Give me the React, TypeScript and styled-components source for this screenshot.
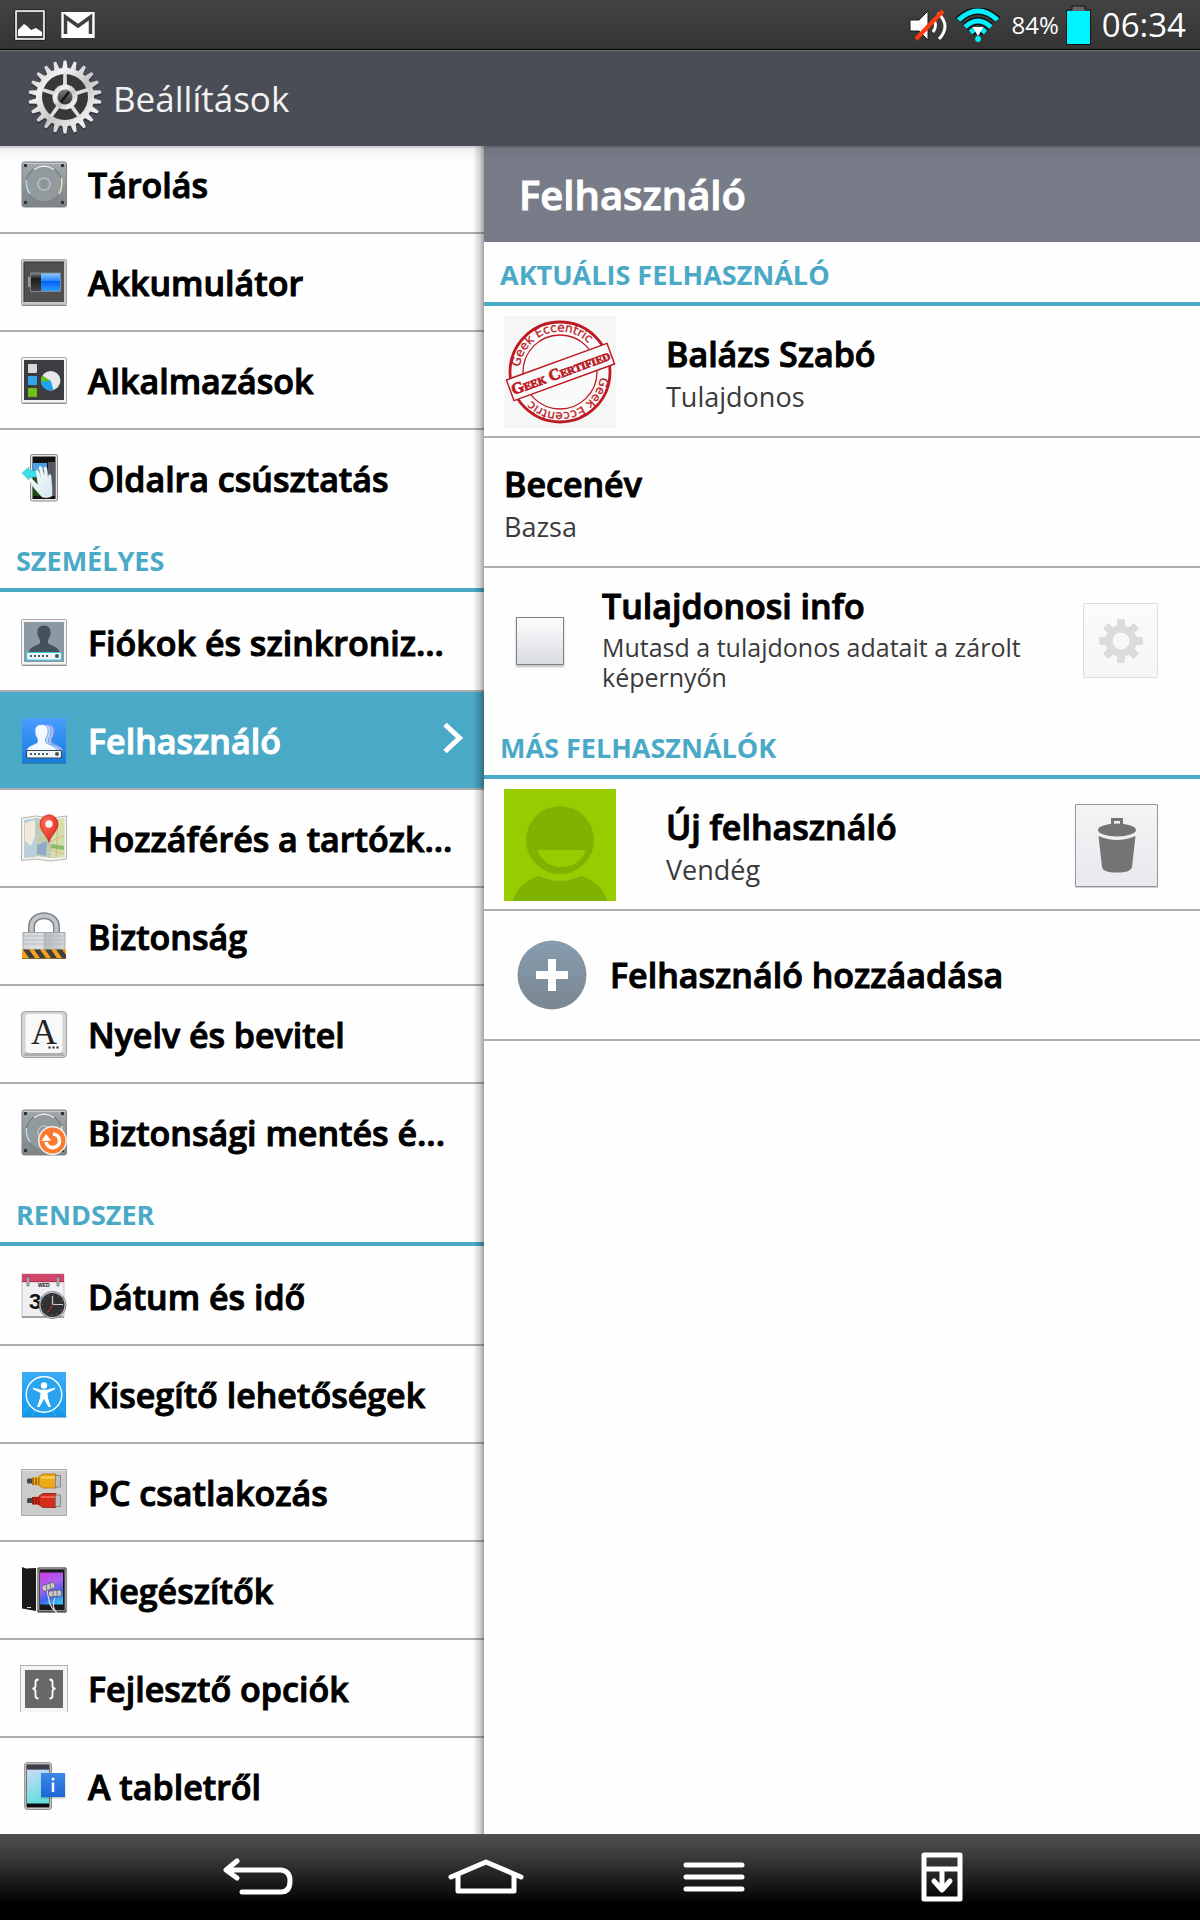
import React from "react";
import styled, { createGlobalStyle } from "styled-components";

const accent = "#4ba9c8";
const divider = "#abafb4";
const fontStack = '"Open Sans", "Noto Sans", sans-serif';

const GlobalStyle = createGlobalStyle`
  *, *::before, *::after { box-sizing: border-box; }
  body { margin: 0; background: #fefefe; font-family: ${fontStack}; }
  h1, h2, h3, p, ul { margin: 0; padding: 0; }
  ul { list-style: none; }
  svg { display: block; flex: none; }
`;

/* ---------- Layout ---------- */

const Screen = styled.div`
  display: flex;
  flex-direction: column;
  min-height: 100vh;
`;

const StatusBar = styled.div`
  display: flex;
  justify-content: space-between;
  align-items: center;
  height: 50px;
  padding: 0 14px;
  background: linear-gradient(#434343, #343434);
  border-bottom: 1px solid #000;
  color: #fff;
`;

const StatusGroup = styled.div<{ $gap: number }>`
  display: flex;
  align-items: center;
  gap: ${(p) => p.$gap}px;
`;

const Percent = styled.span`
  margin-left: 5px;
  font-size: 24px;
`;

const Clock = styled.time`
  margin-left: 4px;
  font-size: 33px;
`;

const AppBar = styled.header`
  display: flex;
  align-items: center;
  gap: 10px;
  height: 96px;
  padding-left: 27px;
  padding-bottom: 2px;
  background: #4a4d55;
  border-top: 1px solid #73767c;
`;

const AppTitle = styled.h1`
  padding-top: 2px;
  color: #f2f2f2;
  font-size: 35px;
  font-weight: 400;
  line-height: 48px;
`;

const Body = styled.main`
  position: relative;
  flex: 1;
  display: grid;
  grid-template-columns: 484px 1fr;
  background: #fefefe;

  &::before {
    content: "";
    position: absolute;
    inset: 0 0 auto 0;
    height: 16px;
    z-index: 2;
    pointer-events: none;
    background: linear-gradient(rgba(0, 0, 0, 0.22), rgba(0, 0, 0, 0.05) 3px, rgba(0, 0, 0, 0));
  }
`;

const Sidebar = styled.nav`
  position: relative;
  overflow: hidden;

  &::after {
    content: "";
    position: absolute;
    inset: 0 0 0 auto;
    width: 11px;
    pointer-events: none;
    background: linear-gradient(90deg, rgba(0, 0, 0, 0), rgba(0, 0, 0, 0.16) 60%, rgba(0, 0, 0, 0.36));
  }
`;

const MenuScroll = styled.div`
  margin-top: -12px;
`;

const MenuItem = styled.li`
  border-top: 2px solid ${divider};
  &:first-child { border-top-color: transparent; }
`;

const MenuLink = styled.a<{ $active?: boolean }>`
  display: flex;
  align-items: center;
  gap: 20px;
  height: 96px;
  padding: 0 20px;
  background: ${(p) => (p.$active ? accent : "transparent")};
  color: ${(p) => (p.$active ? "#fff" : "#000")};
  font-size: 34px;
  font-weight: 600;
  -webkit-text-stroke: 1px currentColor;
  text-decoration: none;
  white-space: nowrap;
`;

const MenuLabel = styled.span`
  flex: 1;
  padding-top: 2px;
`;

const SectionTitle = styled.h2<{ $first?: boolean }>`
  padding: ${(p) => (p.$first ? 6 : 8)}px 16px 0;
  border-bottom: 4px solid ${accent};
  color: ${accent};
  font-size: 27px;
  font-weight: 700;
  line-height: 54px;
`;

const Detail = styled.section`
  min-width: 0;
`;

const DetailTitle = styled.h2`
  padding: 2px 0 0 35px;
  background: #777c88;
  color: #fff;
  font-size: 40px;
  font-weight: 600;
  -webkit-text-stroke: 1px currentColor;
  line-height: 94px;
`;

const Rows = styled.ul<{ $closed?: boolean }>`
  border-bottom: ${(p) => (p.$closed ? `2px solid ${divider}` : "none")};
`;

const Row = styled.li<{ $inset: number; $gap?: number; $tall?: boolean }>`
  display: flex;
  align-items: center;
  gap: ${(p) => p.$gap ?? 0}px;
  min-height: ${(p) => (p.$tall ? 147 : 130)}px;
  padding: 0 42px 0 ${(p) => p.$inset}px;
  border-top: 2px solid ${divider};
  &:first-child { border-top-color: transparent; }
`;

const RowText = styled.div<{ $compact?: boolean }>`
  flex: 1;
  min-width: 0;
  display: flex;
  flex-direction: column;
  gap: ${(p) => (p.$compact ? 6 : 8)}px;
  padding: ${(p) => (p.$compact ? "0 0 4px" : "2px 0 0")};
`;

const RowTitle = styled.h3`
  color: #000;
  font-size: 34px;
  font-weight: 600;
  -webkit-text-stroke: 1px currentColor;
  line-height: 40px;
`;

const RowNote = styled.p<{ $small?: boolean }>`
  color: #3a3a3a;
  font-size: ${(p) => (p.$small ? 25 : 27)}px;
  line-height: 30px;
`;

const CheckBox = styled.input`
  appearance: none;
  flex: none;
  width: 48px;
  height: 48px;
  margin: 0;
  border: 1px solid #7c7f84;
  background: linear-gradient(#fdfdfd, #d9dce2);
  box-shadow: 0 2px 2px rgba(0, 0, 0, 0.25);
`;

const IconButton = styled.button<{ $size: number; $muted?: boolean }>`
  display: grid;
  place-items: center;
  flex: none;
  width: ${(p) => p.$size}px;
  height: ${(p) => p.$size}px;
  padding: 0;
  border: 1px solid ${(p) => (p.$muted ? "#dcdddf" : "#93979f")};
  border-radius: 1px;
  background: ${(p) => (p.$muted ? "linear-gradient(#fbfbfb, #f6f6f8)" : "linear-gradient(#f4f4f5, #e8e9ee)")};
  box-shadow: ${(p) => (p.$muted ? "none" : "0 1px 1px rgba(0, 0, 0, 0.2)")};
`;

const AddButton = styled.button`
  display: flex;
  align-items: center;
  gap: 23px;
  padding: 0;
  border: 0;
  background: none;
  color: #000;
  font: 600 34px/40px ${fontStack};
  -webkit-text-stroke: 1px currentColor;
`;

const NavBar = styled.footer`
  display: grid;
  grid-template-columns: repeat(4, 1fr);
  height: 86px;
  padding: 0 12%;
  background: linear-gradient(#505050, #3c3c3c 24%, #000 82%);
`;

const NavButton = styled.button`
  display: grid;
  place-items: center;
  padding: 0;
  border: 0;
  background: none;
`;

/* ---------- Status bar icons ---------- */

const PictureIcon = () => (
  <svg width="32" height="32" viewBox="0 0 32 32">
    <rect x="0.5" y="0.5" width="31" height="31" fill="#111" />
    <rect x="2" y="2" width="28" height="28" fill="#3c3c3c" stroke="#fff" strokeWidth="1.6" />
    <path d="M4 27V21L10 15L13 17L17 21L22 19L28 23V27Z" fill="#fff" />
  </svg>
);

const MailIcon = () => (
  <svg width="34" height="26" viewBox="0 0 34 26">
    <rect width="34" height="26" fill="#fff" />
    <path d="M0.5 0V26M33.5 0V26" stroke="#bbb" />
    <path d="M4.5 22V5L17 14L29.5 5V22" fill="none" stroke="#3f3f3f" strokeWidth="3.5" />
    <path d="M3 0H31L17 10Z" fill="#fff" />
  </svg>
);

const MutedIcon = () => (
  <svg width="40" height="34" viewBox="0 0 40 34">
    <path d="M1 12H10L19 3V32L10 23H1Z" fill="#fff" stroke="#1a1a1a" strokeWidth="1" />
    <path d="M24 11Q29 17.500 24 24M29 5Q36 12 36 18Q36 25 30 31" fill="none" stroke="#fff" strokeWidth="3" />
    <path d="M7 31L34 3" stroke="#ff3a0c" strokeWidth="4" />
  </svg>
);

const WifiIcon = () => (
  <svg width="44" height="34" viewBox="0 0 44 34">
    <g fill="none" stroke="#111" strokeWidth="7.500">
      <path d="M2 12Q22 -6 42 12M9 19Q22 7 35 19M15 25L18 22M29 25L26 22" />
    </g>
    <g fill="none" stroke="#00f0ff" strokeWidth="5">
      <path d="M2.500 12Q22 -6 41.500 12M9 19Q22 7 35 19" />
      <path d="M14.500 24.500L18 21.500M29.500 24.500L26 21.500" />
    </g>
    <path d="M16.500 19H27.500L22 28Z" fill="#fff" />
    <circle cx="22" cy="31" r="2.900" fill="#00f0ff" />
  </svg>
);

const BatteryIcon = () => (
  <svg width="25" height="40" viewBox="0 0 25 40">
    <path d="M6 1H19V5H24.500V39.500H0.500V5H6Z" fill="#666" stroke="#111" />
    <rect x="1" y="6" width="23" height="33" fill="#00f4ff" />
  </svg>
);

/* ---------- Header gear ---------- */

const polar = (c: number, r: number, deg: number) => {
  const a = (deg * Math.PI) / 180;
  return `${(c + r * Math.cos(a)).toFixed(2)} ${(c + r * Math.sin(a)).toFixed(2)}`;
};

const gearPath = (c: number, teeth: number, outer: number, root: number, tip: number, base: number) => {
  const step = 360 / teeth;
  const points: string[] = [];
  for (let i = 0; i < teeth; i++) {
    const mid = i * step - 90;
    points.push(polar(c, root, mid - base), polar(c, outer, mid - tip), polar(c, outer, mid + tip), polar(c, root, mid + base));
  }
  return `M${points.join("L")}Z`;
};

const SettingsGear = () => (
  <svg width="76" height="78" viewBox="0 0 76 78">
    <defs>
      <linearGradient id="gearMetal" x1="0" y1="0" x2="1" y2="1">
        <stop offset="0" stopColor="#bdbdbd" />
        <stop offset="0.300" stopColor="#f2f2f2" />
        <stop offset="0.550" stopColor="#c6c6c6" />
        <stop offset="0.800" stopColor="#f0f0f0" />
        <stop offset="1" stopColor="#b4b4b4" />
      </linearGradient>
      <linearGradient id="gearScrew" x1="0" y1="0" x2="0" y2="1">
        <stop offset="0" stopColor="#777" />
        <stop offset="1" stopColor="#333" />
      </linearGradient>
    </defs>
    <path d={gearPath(38, 22, 36.5, 29, 2.2, 5.2)} transform="translate(0 2)" fill="#22242a" opacity="0.500" />
    <path d={gearPath(38, 22, 36.5, 29, 2.2, 5.2)} fill="url(#gearMetal)" />
    <circle cx="38" cy="38" r="23" fill="#39373a" />
    {[0, 72, 144, 216, 288].map((a) => (
      <path key={a} d="M36 28L36.300 14H39.700L40 28Z" fill="#dedede" transform={`rotate(${a} 38 38)`} />
    ))}
    <circle cx="38" cy="38" r="12.500" fill="url(#gearMetal)" />
    <circle cx="38" cy="38" r="7.500" fill="url(#gearScrew)" />
    <path d="M34 43L42 33" stroke="#161616" strokeWidth="2.500" />
  </svg>
);

/* ---------- Menu icons (48 × 48) ---------- */

const Tile = ({ children }: { children?: React.ReactNode }) => (
  <svg width="48" height="48" viewBox="0 0 48 48" aria-hidden="true">
    {children}
  </svg>
);

const DiskShape = ({ id }: { id: string }) => (
  <>
    <defs>
      <linearGradient id={id} x1="0" y1="0" x2="0" y2="1">
        <stop offset="0" stopColor="#a3aaae" />
        <stop offset="1" stopColor="#7d8487" />
      </linearGradient>
    </defs>
    <rect x="2" y="2" width="44.500" height="45" rx="2" fill={`url(#${id})`} stroke="#7f8587" strokeWidth="1" />
    <path d="M3 3.500H45.500" stroke="#c6cbce" />
    <circle cx="24" cy="24" r="18" fill="#939a9d" stroke="#7b8285" strokeWidth="1.500" />
    <path d="M14 9.500Q24 2.500 34 9.500" fill="none" stroke="#eef2f2" strokeWidth="1.500" />
    <path d="M6.500 20Q5.500 28 10 34" fill="none" stroke="#b9d9e4" strokeWidth="1.500" />
    <path d="M41.500 18Q43 27 39 34" fill="none" stroke="#e8dfc0" strokeWidth="1.500" />
    <circle cx="24" cy="24" r="6" fill="#8f9699" stroke="#b9bfc1" strokeWidth="1.500" />
    <path d="M4 4h3v3h-3zM41 4h3v3h-3zM4 41h3v3h-3zM41 41h3v3h-3z" fill="#2f3233" />
  </>
);

const FrameShape = ({ fill, frame = "#f3f3f4" }: { fill: string; frame?: string }) => (
  <>
    <rect x="1.500" y="1.500" width="45" height="45.500" rx="1" fill={frame} stroke="#a9a9ab" />
    <path d="M2 47.500H46.500" stroke="#8b8b8d" />
    <rect x="4" y="4" width="40" height="40" fill={fill} />
  </>
);

const StorageIcon = () => (
  <Tile>
    <DiskShape id="diskA" />
  </Tile>
);

const PowerIcon = () => (
  <Tile>
    <defs>
      <linearGradient id="cellBlue" x1="0" y1="0" x2="0" y2="1">
        <stop offset="0" stopColor="#8ec8ff" />
        <stop offset="0.400" stopColor="#2c86ff" />
        <stop offset="0.450" stopColor="#0062f5" />
        <stop offset="1" stopColor="#2f9bff" />
      </linearGradient>
      <linearGradient id="cellDark" x1="0" y1="0" x2="0" y2="1">
        <stop offset="0" stopColor="#777" />
        <stop offset="0.300" stopColor="#1d1d1d" />
        <stop offset="1" stopColor="#444" />
      </linearGradient>
    </defs>
    <FrameShape fill="#505051" frame="#c9c8c8" />
    <path d="M4 44V4H44" fill="none" stroke="#333" />
    <rect x="8" y="19" width="3" height="10" fill="#999" />
    <rect x="10" y="14.500" width="31" height="19.500" rx="1" fill="#7d8794" />
    <rect x="11" y="15.500" width="10" height="17.500" fill="url(#cellDark)" />
    <rect x="21" y="15.500" width="19" height="17.500" fill="url(#cellBlue)" />
  </Tile>
);

const AppsIcon = () => (
  <Tile>
    <FrameShape fill="#3c3d41" />
    <rect x="8" y="8" width="9" height="9" rx="1" fill="#d9dadf" />
    <rect x="8" y="20" width="9" height="9" rx="1" fill="#35a5ee" />
    <rect x="8" y="32" width="9" height="9" rx="1" fill="#6fbf17" />
    <circle cx="30.700" cy="24.700" r="9.700" fill="#e6e8ec" />
    <path d="M30.700 24.700L33.500 34A9.700 9.700 0 0 1 21 24.700L22 21Z" fill="#1fa2f2" />
    <path d="M30.700 24.700L21 25.500A9.700 9.700 0 0 1 22.500 19.500Z" fill="#69bd14" />
  </Tile>
);

const SlideAsideIcon = () => (
  <Tile>
    <defs>
      <linearGradient id="asideHand" x1="0" y1="0" x2="1" y2="1">
        <stop offset="0" stopColor="#fff" />
        <stop offset="1" stopColor="#d3e9ee" />
      </linearGradient>
    </defs>
    <rect x="10.500" y="0.500" width="27" height="46.500" rx="2" fill="#e6e6e6" stroke="#8a8a8a" />
    <rect x="12.500" y="2.500" width="23" height="42.500" fill="#111" />
    <rect x="13" y="9" width="14" height="7" fill="#4f9fe8" />
    <rect x="13" y="16" width="14" height="26" fill="#1d4a17" />
    <rect x="28" y="8" width="7" height="34" fill="#55585c" />
    <path d="M2 19L9 13V16.500H17V23H9V26Z" fill="#38e0ee" stroke="#1fb4c6" strokeWidth="0.500" />
    <path
      d="M16 17Q17 14 19 18L21 24L19 14Q20 10 22 14L24.500 22L24 14Q26 11 27 15L28 23Q30 18 31 22L32 34V42Q27 45 22 43L14 34L9 26Q10 23 13 26L18 31Z"
      fill="url(#asideHand)"
      stroke="#dbe7ea"
      strokeWidth="0.500"
    />
  </Tile>
);

const PinBar = ({ edge }: { edge: string }) => (
  <>
    <rect x="6.500" y="34.500" width="35" height="7.500" rx="1" fill="#eef5f8" stroke={edge} strokeWidth="1.200" />
    <path d="M10 38H29" stroke="#555b62" strokeWidth="2" strokeDasharray="2 2" />
    <circle cx="37" cy="38" r="2" fill="#46505a" />
  </>
);

const personPath =
  "M24 7.500C28.500 7.500 31 10.500 30.500 15C30.300 18 29 20.500 28 22V25C30 28 38 28 39.500 34H9C10 28 18 28 20 25V22C19 20.500 17.700 18 17.500 15C17 10.500 19.500 7.500 24 7.500Z";

const AccountsIcon = () => (
  <Tile>
    <FrameShape fill="#8a99a3" />
    <path d={personPath} fill="#43535b" />
    <PinBar edge="#3fc7de" />
  </Tile>
);

const UsersIcon = () => (
  <Tile>
    <defs>
      <linearGradient id="usersBg" x1="0" y1="0" x2="0" y2="1">
        <stop offset="0" stopColor="#4c9dff" />
        <stop offset="1" stopColor="#127ce0" />
      </linearGradient>
    </defs>
    <rect x="2" y="2" width="44" height="44.500" fill="url(#usersBg)" />
    <path d="M2 47H46.500" stroke="#1b5f9c" />
    <g transform="translate(0 1)" stroke="#4795f2" strokeWidth="0.700">
      <path d={personPath} transform="translate(3.500 0)" fill="#c4b3f2" />
      <path d={personPath} transform="translate(0.500 0)" fill="#b5d8fc" />
      <path d={personPath} transform="translate(-2.500 0)" fill="#f3f9ff" />
    </g>
    <PinBar edge="#3b4652" />
  </Tile>
);

const LocationIcon = () => (
  <Tile>
    <defs>
      <radialGradient id="pinRed" cx="0.350" cy="0.300" r="0.800">
        <stop offset="0" stopColor="#ff6a55" />
        <stop offset="1" stopColor="#dd2718" />
      </radialGradient>
    </defs>
    <path d="M1.500 4L16 2L31 4L46.500 2V45L31 47L16 45L1.500 46.500Z" fill="#f4f3ee" stroke="#b5b5b2" />
    <path d="M4 6L16 4V43L4 44Z" fill="#b9cfdd" />
    <path d="M5 9L15 6V22L11 32L5 27Z" fill="#f1eadb" />
    <path d="M16 4L31 6V44L16 42Z" fill="#bfcdb8" />
    <path d="M17 31L27 27L26 42L17 40Z" fill="#8dabc2" />
    <path d="M31 6L44.500 4V43L31 44Z" fill="#d3dfae" />
    <path d="M16 12L24 20L31 36L44 40M31 27L44 22M18 26L30 22M38 5L36 44" fill="none" stroke="#d9b77c" strokeWidth="1" />
    <path d="M31 32L44 34" stroke="#8fba65" strokeWidth="4" />
    <path d="M29 28.500C27 21 20 17 20 10A9 9.300 0 0 1 38 10C38 17 31 21 29 28.500Z" fill="url(#pinRed)" stroke="#b52217" strokeWidth="0.600" />
    <circle cx="29" cy="10" r="3.700" fill="#f7f4f2" />
  </Tile>
);

const SecurityIcon = () => (
  <Tile>
    <defs>
      <linearGradient id="lockBody" x1="0" y1="0" x2="1" y2="0">
        <stop offset="0" stopColor="#d3d7da" />
        <stop offset="0.480" stopColor="#dde0e3" />
        <stop offset="0.500" stopColor="#b4babf" />
        <stop offset="1" stopColor="#d4d8dc" />
      </linearGradient>
    </defs>
    <path d="M11.500 21V15C11.500 0 36.500 0 36.500 15V21" fill="none" stroke="#7f868b" strokeWidth="7" />
    <path d="M11.500 21V15C11.500 0 36.500 0 36.500 15V21" fill="none" stroke="#c0c6ca" strokeWidth="4" />
    <rect x="3" y="20.500" width="42" height="17" fill="url(#lockBody)" stroke="#969ca0" strokeWidth="0.800" />
    <path d="M3.500 24H44.500M3.500 28H44.500M3.500 32H44.500" stroke="#aeb4b9" strokeWidth="0.800" />
    <rect x="2" y="37.500" width="44" height="8.500" fill="#f6a11d" />
    <path d="M3 37.500H9L15 46H9ZM14 37.500H20L26 46H20ZM25 37.500H31L37 46H31ZM36 37.500H42L46 43V46H42Z" fill="#3e3e3e" />
    <path d="M2 46.500H46" stroke="#8a6a30" />
  </Tile>
);

const LanguageIcon = () => (
  <Tile>
    <rect x="1.500" y="1.500" width="45" height="46" rx="3.500" fill="#d3d3d3" stroke="#9f9f9f" />
    <path d="M3 46L6 42H42L45 46Z" fill="#aeaeae" />
    <rect x="5.500" y="4" width="37" height="39" rx="3" fill="#f8f8f8" />
    <text x="11" y="34" fontFamily="Liberation Serif, serif" fontWeight="400" fontSize="36" fill="#222" style={{ WebkitTextStroke: "0" }}>
      A
    </text>
    <path d="M28.500 36.500h2v2h-2zM32.500 36.500h2v2h-2zM36.500 36.500h2v2h-2z" fill="#222" />
  </Tile>
);

const BackupIcon = () => (
  <Tile>
    <DiskShape id="diskB" />
    <circle cx="32.500" cy="32.500" r="14.500" fill="#f4f1ef" />
    <circle cx="32.500" cy="32.500" r="13" fill="#fb7a2e" />
    <path d="M33 26A6.800 6.800 0 1 1 26 34" fill="none" stroke="#fff" strokeWidth="3.600" />
    <path d="M21.500 33L26 26L31 32.500Z" fill="#fff" />
  </Tile>
);

const DateIcon = () => (
  <Tile>
    <rect x="2" y="2" width="42" height="43" fill="#eff0f3" stroke="#b7b8bb" strokeWidth="0.800" />
    <path d="M2 45H44" stroke="#8d8d8f" strokeWidth="1.500" />
    <rect x="2" y="2" width="42" height="8" fill="#d2456a" />
    <path d="M2 9.700H44" stroke="#a72f50" />
    <path d="M8 6V13M38 6V13" stroke="#7e7e80" strokeWidth="3" strokeLinecap="round" />
    <path d="M8 6V13M38 6V13" stroke="#cfcfd1" strokeWidth="1" />
    <g fontFamily="Liberation Sans, sans-serif" fontWeight="700" fill="#111" style={{ WebkitTextStroke: "0" }}>
      <text x="18" y="15" fontSize="5">WED</text>
      <text x="9" y="37" fontSize="22">3</text>
    </g>
    <circle cx="32.500" cy="33" r="13.500" fill="#cfcfcf" stroke="#6b6b6b" strokeWidth="0.800" />
    <circle cx="32.500" cy="33" r="12" fill="#313133" />
    <circle cx="32.500" cy="33" r="10" fill="none" stroke="#8b8b8b" strokeWidth="1" strokeDasharray="1 4.240" />
    <path d="M32.500 24V32.500H43" fill="none" stroke="#ccc" strokeWidth="1.200" />
    <path d="M34 31L28 40" stroke="#e0322c" strokeWidth="0.900" />
  </Tile>
);

const AccessibilityIcon = () => (
  <Tile>
    <defs>
      <linearGradient id="a11yBg" x1="0" y1="0" x2="0" y2="1">
        <stop offset="0" stopColor="#3aaaf6" />
        <stop offset="1" stopColor="#139aea" />
      </linearGradient>
    </defs>
    <rect x="2" y="2" width="44" height="45" fill="url(#a11yBg)" />
    <path d="M24 24L2 6M24 24L2 42M24 24L46 6M24 24L46 42M24 24L12 47M24 24L36 47M24 24L14 2M24 24L34 2" stroke="#5cbcf8" strokeWidth="0.600" />
    <path d="M2 47H46.500" stroke="#2b7fb8" />
    <circle cx="24" cy="24.500" r="17.800" fill="#2aa3f1" stroke="#fff" strokeWidth="1.400" />
    <circle cx="24" cy="15.500" r="3.200" fill="#fff" />
    <path d="M13 17.500L21 19.700H27L35 17.500V19.200L27.500 23L28 28L31 37H28.500L24 29L19.500 37H17L20 28L20.500 23L13 19.200Z" fill="#fff" />
  </Tile>
);

const PlugShape = ({ y, fill, dark, light }: { y: number; fill: string; dark: string; light: string }) => (
  <g transform={`translate(0 ${y})`}>
    <rect x="7" y="5" width="6" height="5" rx="1.500" fill="#444" />
    <path d="M12 4H20V11.500H12Z" fill={dark} />
    <path d="M14.500 3.500V12M17.500 3.500V12" stroke={fill} />
    <path d="M19 3L23 0.500H36V14.500H23L19 12Z" fill={fill} stroke={dark} strokeWidth="0.800" />
    <path d="M21 4H35" stroke={light} strokeWidth="2" />
    <rect x="35.500" y="2" width="5" height="11.500" fill="#b9bec4" stroke="#767a7f" strokeWidth="0.800" />
  </g>
);

const PcIcon = () => (
  <Tile>
    <rect x="1.500" y="1.500" width="45" height="46" fill="#cbcbcb" stroke="#a9a9a9" />
    <path d="M2 2.500H46" stroke="#e7e7e7" />
    <PlugShape y={5.5} fill="#edaa18" dark="#a8710a" light="#ffd45a" />
    <PlugShape y={25} fill="#d42c1a" dark="#8f1a0e" light="#f0604e" />
  </Tile>
);

const AccessoriesIcon = () => (
  <Tile>
    <defs>
      <linearGradient id="tabletScreen" x1="0.300" y1="0" x2="0.700" y2="1">
        <stop offset="0" stopColor="#c540e8" />
        <stop offset="0.400" stopColor="#a763f2" />
        <stop offset="0.700" stopColor="#3f62ea" />
        <stop offset="1" stopColor="#38bdf5" />
      </linearGradient>
    </defs>
    <path d="M2 1L6 2.500L16 2V45L2 42.500Z" fill="#1a1a1b" />
    <rect x="17.500" y="1.500" width="29" height="45" rx="2" fill="#191919" stroke="#8d8d8f" strokeWidth="1.200" />
    <rect x="18.800" y="2.800" width="26.400" height="42" rx="1" fill="none" stroke="#eee" strokeWidth="0.800" />
    <rect x="20" y="6.500" width="23" height="32" fill="url(#tabletScreen)" />
    <path d="M27 23C29 32 28 40 36 46M35 32C32 38 33 43 37 47" fill="none" stroke="#dcdcdc" strokeWidth="1.200" />
    <g fill="#c9c9cc" stroke="#4c4c50" strokeWidth="0.600">
      <rect x="22" y="18" width="13" height="6" rx="2" transform="rotate(-18 28 21)" />
      <rect x="28.500" y="24.500" width="13" height="6" rx="2" transform="rotate(-5 35 27)" />
      <path d="M26 18L27 24M30 17L31 23M33 24.500V31M37 24V30.500" />
    </g>
    <path d="M7 41.500h4" stroke="#ddd" />
  </Tile>
);

const DeveloperIcon = () => (
  <Tile>
    <rect x="0.500" y="1.500" width="47" height="48" fill="#f3f5f7" stroke="#b0b3b6" />
    <rect x="5" y="6" width="38" height="38" fill="#686868" />
    <path
      d="M18.500 15.500Q15.500 15.500 15.500 18V22Q15.500 24.500 12.500 24.700Q15.500 25 15.500 27.500V32Q15.500 34.500 18.500 34.500M29.500 15.500Q32.500 15.500 32.500 18V22Q32.500 24.500 35.500 24.700Q32.500 25 32.500 27.500V32Q32.500 34.500 29.500 34.500"
      fill="none"
      stroke="#fff"
      strokeWidth="1.800"
    />
  </Tile>
);

const AboutIcon = () => (
  <Tile>
    <defs>
      <linearGradient id="aboutScreen" x1="0" y1="0" x2="0.300" y2="1">
        <stop offset="0" stopColor="#cfd9fb" />
        <stop offset="1" stopColor="#66dedd" />
      </linearGradient>
      <linearGradient id="aboutInfo" x1="0" y1="0" x2="0" y2="1">
        <stop offset="0" stopColor="#3c8ae6" />
        <stop offset="1" stopColor="#1e66d6" />
      </linearGradient>
    </defs>
    <rect x="4.800" y="0.800" width="26.500" height="46.500" rx="2" fill="#ddd" stroke="#777" />
    <rect x="6.500" y="2.500" width="23" height="43" fill="#0d0d0d" />
    <rect x="7" y="3" width="22" height="4" fill="#3b4048" />
    <rect x="7" y="7.500" width="22" height="34" fill="url(#aboutScreen)" />
    <rect x="21" y="12" width="24.500" height="24.500" fill="#000" opacity="0.200" />
    <rect x="21" y="11" width="24" height="24" fill="url(#aboutInfo)" />
    <path d="M33 20.500V30" stroke="#fff" strokeWidth="2.500" />
    <circle cx="33" cy="17" r="1.500" fill="#fff" />
  </Tile>
);

const Chevron = () => (
  <svg width="22" height="34" viewBox="0 0 22 34" aria-hidden="true">
    <path d="M3 1.500L17.500 15L3 28.500" fill="none" stroke="#fff" strokeWidth="5" />
  </svg>
);

/* ---------- Detail pictures ---------- */

const StampAvatar = () => (
  <svg width="112" height="112" viewBox="0 0 112 112" role="img" aria-label="Geek Certified">
    <defs>
      <path id="ringText" d="M15.500 56A40.500 40.500 0 0 1 96.500 56A40.500 40.500 0 0 1 15.500 56" />
      <path id="ringTextLow" d="M96.500 56A40.500 40.500 0 0 1 15.500 56" />
    </defs>
    <rect width="112" height="112" fill="#f6f6f6" />
    <circle cx="56" cy="56" r="50" fill="#fafafa" stroke="#bd1a26" strokeWidth="2.800" />
    <circle cx="56" cy="56" r="37" fill="none" stroke="#bd1a26" strokeWidth="1.300" />
    <g fill="#bd1a26" stroke="#bd1a26" strokeWidth="0.300" fontFamily="DejaVu Sans, sans-serif" fontSize="12">
      <text><textPath href="#ringText" startOffset="5">Geek Eccentric</textPath></text>
      <text><textPath href="#ringTextLow" startOffset="5">Geek Eccentric</textPath></text>
    </g>
    <g transform="rotate(-20 56.500 56)">
      <rect x="3" y="45" width="107" height="22" fill="#fbfbfb" stroke="#bd1a26" strokeWidth="1.500" />
      <text
        x="56.500"
        y="61.500"
        textAnchor="middle"
        fill="#bd1a26"
        stroke="#bd1a26"
        strokeWidth="0.800"
        fontFamily="Liberation Serif, serif"
        fontWeight="700"
        fontSize="16"
        style={{ fontVariant: "small-caps" }}
      >
        Geek Certified
      </text>
    </g>
  </svg>
);

const GuestAvatar = () => (
  <svg width="112" height="112" viewBox="0 0 112 112" aria-hidden="true">
    <rect width="112" height="112" fill="#99cc00" />
    <circle cx="56" cy="51" r="34" fill="#7fb200" />
    <path d="M33 61H82Q76 78 58 78Q40 78 33 61Z" fill="#99cc00" />
    <path d="M8.500 112Q15 93 35 87Q56 97 77 87Q97 93 103.500 112Z" fill="#7fb200" />
  </svg>
);

const SmallGear = () => (
  <svg width="44" height="44" viewBox="0 0 44 44" aria-hidden="true">
    <path
      d={`${gearPath(22, 8, 21.5, 15.5, 9, 13)}M22 13A9 9 0 1 0 22 31A9 9 0 1 0 22 13Z`}
      fill="#dadbdc"
      fillRule="evenodd"
      stroke="#dadbdc"
      strokeLinejoin="round"
    />
  </svg>
);

const TrashIcon = () => (
  <svg width="38" height="56" viewBox="0 0 38 56" aria-hidden="true">
    <path d="M14.500 7V2.500H23.500V7" fill="none" stroke="#747474" strokeWidth="3" />
    <ellipse cx="19" cy="13" rx="19" ry="6.500" fill="#747474" />
    <path d="M0.500 19Q19 27 37.500 19L34 50Q33 55.500 19 55.500Q5 55.500 4 50Z" fill="#747474" />
  </svg>
);

const PlusIcon = () => (
  <svg width="70" height="70" viewBox="0 0 70 70" aria-hidden="true">
    <defs>
      <linearGradient id="plusBg" x1="0" y1="0" x2="0" y2="1">
        <stop offset="0" stopColor="#889db0" />
        <stop offset="1" stopColor="#7a8690" />
      </linearGradient>
    </defs>
    <circle cx="35" cy="35" r="34.500" fill="url(#plusBg)" />
    <path d="M35 19V51M19 35H51" stroke="#fff" strokeWidth="8" />
  </svg>
);

/* ---------- Navigation icons ---------- */

const navStroke = { fill: "none", stroke: "#fff", strokeWidth: 5, strokeLinecap: "round", strokeLinejoin: "round" } as const;

const BackIcon = () => (
  <svg width="70" height="38" viewBox="0 0 70 38">
    <path d="M14 3L3 12L14 20M4 12H58Q67 13 67 23Q67 34 58 34H19" {...navStroke} />
  </svg>
);

const HomeIcon = () => (
  <svg width="76" height="38" viewBox="0 0 76 38">
    <path d="M3 19L38 4L73 19M10 17V33H66V17" {...navStroke} />
  </svg>
);

const MenuIcon = () => (
  <svg width="62" height="30" viewBox="0 0 62 30">
    <path d="M3 3H59M3 15H59M3 27H59" {...navStroke} />
  </svg>
);

const PullDownIcon = () => (
  <svg width="42" height="50" viewBox="0 0 42 50">
    <path d="M3 3H39V47H3ZM3 17H39M21 18V37M13 29L21 38L29 29" {...navStroke} />
  </svg>
);

/* ---------- Data ---------- */

type Entry = { label: string; icon: React.ComponentType; active?: boolean };

const menu: { title?: string; items: Entry[] }[] = [
  {
    items: [
      { label: "Tárolás", icon: StorageIcon },
      { label: "Akkumulátor", icon: PowerIcon },
      { label: "Alkalmazások", icon: AppsIcon },
      { label: "Oldalra csúsztatás", icon: SlideAsideIcon },
    ],
  },
  {
    title: "SZEMÉLYES",
    items: [
      { label: "Fiókok és szinkroniz...", icon: AccountsIcon },
      { label: "Felhasználó", icon: UsersIcon, active: true },
      { label: "Hozzáférés a tartózk...", icon: LocationIcon },
      { label: "Biztonság", icon: SecurityIcon },
      { label: "Nyelv és bevitel", icon: LanguageIcon },
      { label: "Biztonsági mentés é...", icon: BackupIcon },
    ],
  },
  {
    title: "RENDSZER",
    items: [
      { label: "Dátum és idő", icon: DateIcon },
      { label: "Kisegítő lehetőségek", icon: AccessibilityIcon },
      { label: "PC csatlakozás", icon: PcIcon },
      { label: "Kiegészítők", icon: AccessoriesIcon },
      { label: "Fejlesztő opciók", icon: DeveloperIcon },
      { label: "A tabletről", icon: AboutIcon },
    ],
  },
];

export default function App() {
  return (
    <Screen>
      <GlobalStyle />
      <StatusBar>
        <StatusGroup $gap={15}>
          <PictureIcon />
          <MailIcon />
        </StatusGroup>
        <StatusGroup $gap={7}>
          <MutedIcon />
          <WifiIcon />
          <Percent>84%</Percent>
          <BatteryIcon />
          <Clock>06:34</Clock>
        </StatusGroup>
      </StatusBar>

      <AppBar>
        <SettingsGear />
        <AppTitle>Beállítások</AppTitle>
      </AppBar>

      <Body>
        <Sidebar>
          <MenuScroll>
            {menu.map((group, i) => (
              <React.Fragment key={i}>
                {group.title && <SectionTitle>{group.title}</SectionTitle>}
                <ul>
                  {group.items.map(({ label, icon: Icon, active }) => (
                    <MenuItem key={label}>
                      <MenuLink href="#" $active={active} aria-current={active ? "page" : undefined}>
                        <Icon />
                        <MenuLabel>{label}</MenuLabel>
                        {active && <Chevron />}
                      </MenuLink>
                    </MenuItem>
                  ))}
                </ul>
              </React.Fragment>
            ))}
          </MenuScroll>
        </Sidebar>

        <Detail>
          <DetailTitle>Felhasználó</DetailTitle>

          <SectionTitle $first>AKTUÁLIS FELHASZNÁLÓ</SectionTitle>
          <Rows>
            <Row $inset={20} $gap={50}>
              <StampAvatar />
              <RowText>
                <RowTitle>Balázs Szabó</RowTitle>
                <RowNote>Tulajdonos</RowNote>
              </RowText>
            </Row>
            <Row $inset={20}>
              <RowText>
                <RowTitle>Becenév</RowTitle>
                <RowNote>Bazsa</RowNote>
              </RowText>
            </Row>
            <Row $inset={32} $gap={38} $tall>
              <CheckBox type="checkbox" id="owner-info" />
              <RowText $compact>
                <RowTitle>
                  <label htmlFor="owner-info">Tulajdonosi info</label>
                </RowTitle>
                <RowNote $small>Mutasd a tulajdonos adatait a zárolt képernyőn</RowNote>
              </RowText>
              <IconButton type="button" $size={75} $muted disabled aria-label="Tulajdonosi info beállításai">
                <SmallGear />
              </IconButton>
            </Row>
          </Rows>

          <SectionTitle>MÁS FELHASZNÁLÓK</SectionTitle>
          <Rows $closed>
            <Row $inset={20} $gap={50}>
              <GuestAvatar />
              <RowText>
                <RowTitle>Új felhasználó</RowTitle>
                <RowNote>Vendég</RowNote>
              </RowText>
              <IconButton type="button" $size={83} aria-label="Törlés">
                <TrashIcon />
              </IconButton>
            </Row>
            <Row $inset={33}>
              <AddButton type="button">
                <PlusIcon />
                Felhasználó hozzáadása
              </AddButton>
            </Row>
          </Rows>
        </Detail>
      </Body>

      <NavBar>
        <NavButton type="button" aria-label="Vissza"><BackIcon /></NavButton>
        <NavButton type="button" aria-label="Kezdőlap"><HomeIcon /></NavButton>
        <NavButton type="button" aria-label="Menü"><MenuIcon /></NavButton>
        <NavButton type="button" aria-label="Értesítések"><PullDownIcon /></NavButton>
      </NavBar>
    </Screen>
  );
}
